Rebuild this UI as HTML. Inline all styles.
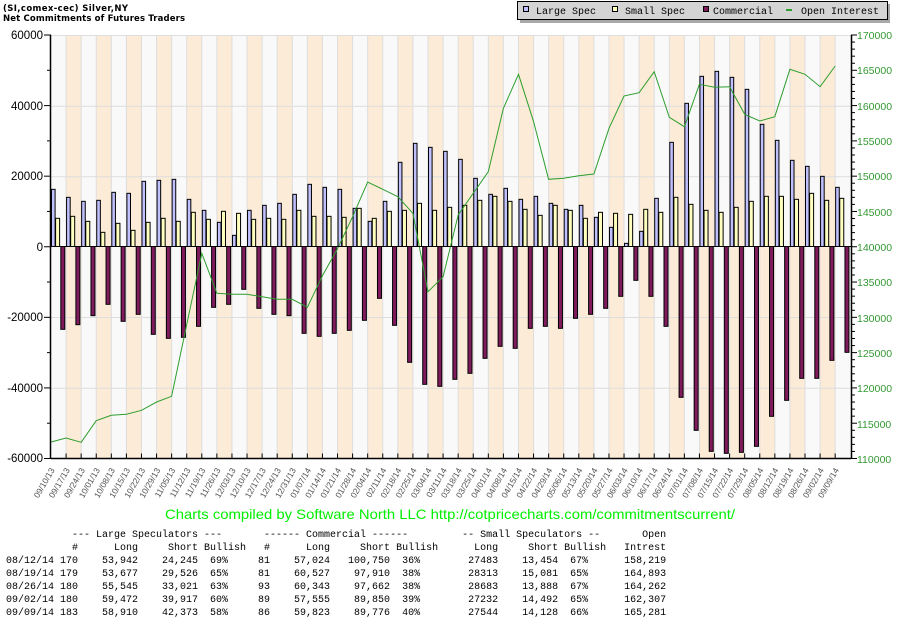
<!DOCTYPE html>
<html><head><meta charset="utf-8"><style>
html,body{margin:0;padding:0;background:#fff;width:900px;height:620px;overflow:hidden}
svg{display:block}
pre{margin:0;position:absolute;left:6px;top:529px;font:10px/13px "Liberation Mono",monospace;color:#000}
</style></head><body>
<svg id="s" width="900" height="620" xmlns="http://www.w3.org/2000/svg">
<g id="bg"></g>
<g id="bars"></g>
<polyline id="oi" fill="none" stroke="#2e9e2e" stroke-width="1"/>
<g id="ax"></g>
<text x="3" y="11" font-family="DejaVu Sans,sans-serif" font-weight="bold" font-size="8.5" textLength="125">(SI,comex-cec) Silver,NY</text>
<text x="3" y="21" font-family="DejaVu Sans,sans-serif" font-weight="bold" font-size="8.5" textLength="182">Net Commitments of Futures Traders</text>
<rect x="520" y="4" width="370" height="19" fill="#a8a8a8"/>
<rect x="517.5" y="1.5" width="370" height="18" fill="#d4d4d4" stroke="#000"/>
<rect x="523.5" y="6.5" width="5" height="5" fill="#c0c0ff" stroke="#000"/>
<rect x="612.5" y="6.5" width="5" height="5" fill="#ffffc0" stroke="#000"/>
<rect x="703.5" y="6.5" width="5" height="5" fill="#7f1a5c" stroke="#000"/>
<rect x="786" y="9" width="6" height="2" fill="#2e9e2e"/>
<g font-family="Liberation Mono,monospace" font-size="10">
<text x="536" y="14">Large Spec</text><text x="625" y="14">Small Spec</text><text x="713" y="14">Commercial</text><text x="801" y="14">Open Interest</text>
</g>
<g font-family="Liberation Sans,sans-serif" font-size="11.5" text-anchor="end">
<text x="43" y="39">60000</text><text x="43" y="110">40000</text><text x="43" y="180">20000</text><text x="43" y="251">0</text><text x="43" y="321">-20000</text><text x="43" y="392">-40000</text><text x="43" y="462">-60000</text>
</g>
<g font-family="Liberation Sans,sans-serif" font-size="10.5" fill="#339933">
<text x="857" y="39">170000</text><text x="857" y="74">165000</text><text x="857" y="110">160000</text><text x="857" y="145">155000</text><text x="857" y="180">150000</text><text x="857" y="216">145000</text><text x="857" y="251">140000</text><text x="857" y="286">135000</text><text x="857" y="322">130000</text><text x="857" y="357">125000</text><text x="857" y="392">120000</text><text x="857" y="428">115000</text><text x="857" y="463">110000</text>
</g>
<g font-family="Liberation Sans,sans-serif" font-size="8.5" fill="#555" text-anchor="end">
<text transform="translate(55,470) rotate(-60)">09/10/13</text>
<text transform="translate(70.1,470) rotate(-60)">09/17/13</text>
<text transform="translate(85.2,470) rotate(-60)">09/24/13</text>
<text transform="translate(100.2,470) rotate(-60)">10/01/13</text>
<text transform="translate(115.3,470) rotate(-60)">10/08/13</text>
<text transform="translate(130.4,470) rotate(-60)">10/15/13</text>
<text transform="translate(145.5,470) rotate(-60)">10/22/13</text>
<text transform="translate(160.6,470) rotate(-60)">10/29/13</text>
<text transform="translate(175.6,470) rotate(-60)">11/05/13</text>
<text transform="translate(190.7,470) rotate(-60)">11/12/13</text>
<text transform="translate(205.8,470) rotate(-60)">11/19/13</text>
<text transform="translate(220.9,470) rotate(-60)">11/26/13</text>
<text transform="translate(236,470) rotate(-60)">12/03/13</text>
<text transform="translate(251,470) rotate(-60)">12/10/13</text>
<text transform="translate(266.1,470) rotate(-60)">12/17/13</text>
<text transform="translate(281.2,470) rotate(-60)">12/24/13</text>
<text transform="translate(296.3,470) rotate(-60)">12/31/13</text>
<text transform="translate(311.4,470) rotate(-60)">01/07/14</text>
<text transform="translate(326.4,470) rotate(-60)">01/14/14</text>
<text transform="translate(341.5,470) rotate(-60)">01/21/14</text>
<text transform="translate(356.6,470) rotate(-60)">01/28/14</text>
<text transform="translate(371.7,470) rotate(-60)">02/04/14</text>
<text transform="translate(386.8,470) rotate(-60)">02/11/14</text>
<text transform="translate(401.8,470) rotate(-60)">02/18/14</text>
<text transform="translate(416.9,470) rotate(-60)">02/25/14</text>
<text transform="translate(432,470) rotate(-60)">03/04/14</text>
<text transform="translate(447.1,470) rotate(-60)">03/11/14</text>
<text transform="translate(462.2,470) rotate(-60)">03/18/14</text>
<text transform="translate(477.2,470) rotate(-60)">03/25/14</text>
<text transform="translate(492.3,470) rotate(-60)">04/01/14</text>
<text transform="translate(507.4,470) rotate(-60)">04/08/14</text>
<text transform="translate(522.5,470) rotate(-60)">04/15/14</text>
<text transform="translate(537.6,470) rotate(-60)">04/22/14</text>
<text transform="translate(552.6,470) rotate(-60)">04/29/14</text>
<text transform="translate(567.7,470) rotate(-60)">05/06/14</text>
<text transform="translate(582.8,470) rotate(-60)">05/13/14</text>
<text transform="translate(597.9,470) rotate(-60)">05/20/14</text>
<text transform="translate(613,470) rotate(-60)">05/27/14</text>
<text transform="translate(628,470) rotate(-60)">06/03/14</text>
<text transform="translate(643.1,470) rotate(-60)">06/10/14</text>
<text transform="translate(658.2,470) rotate(-60)">06/17/14</text>
<text transform="translate(673.3,470) rotate(-60)">06/24/14</text>
<text transform="translate(688.4,470) rotate(-60)">07/01/14</text>
<text transform="translate(703.4,470) rotate(-60)">07/08/14</text>
<text transform="translate(718.5,470) rotate(-60)">07/15/14</text>
<text transform="translate(733.6,470) rotate(-60)">07/22/14</text>
<text transform="translate(748.7,470) rotate(-60)">07/29/14</text>
<text transform="translate(763.8,470) rotate(-60)">08/05/14</text>
<text transform="translate(778.8,470) rotate(-60)">08/12/14</text>
<text transform="translate(793.9,470) rotate(-60)">08/19/14</text>
<text transform="translate(809,470) rotate(-60)">08/26/14</text>
<text transform="translate(824.1,470) rotate(-60)">09/02/14</text>
<text transform="translate(839.2,470) rotate(-60)">09/09/14</text>
</g>
<text x="165" y="519" font-family="Liberation Sans,sans-serif" font-size="14" fill="#00ee00" textLength="570" lengthAdjust="spacingAndGlyphs">Charts compiled by Software North LLC  http://cotpricecharts.com/commitmentscurrent/</text>
</svg>
<pre>           --- Large Speculators ---       ------ Commercial ------         -- Small Speculators --       Open
           #      Long     Short Bullish   #      Long     Short Bullish      Long     Short Bullish   Intrest
08/12/14 170    53,942    24,245  69%     81    57,024   100,750  36%        27483    13,454  67%      158,219
08/19/14 179    53,677    29,526  65%     81    60,527    97,910  38%        28313    15,081  65%      164,893
08/26/14 180    55,545    33,021  63%     93    60,343    97,662  38%        28683    13,888  67%      164,262
09/02/14 180    59,472    39,917  60%     89    57,555    89,850  39%        27232    14,492  65%      162,307
09/09/14 183    58,910    42,373  58%     86    59,823    89,776  40%        27544    14,128  66%      165,281</pre>
<script>
var NS="http://www.w3.org/2000/svg";
function el(p,t,a){var e=document.createElementNS(NS,t);for(var k in a)e.setAttribute(k,a[k]);p.appendChild(e);return e;}
var bg=document.getElementById("bg"),bars=document.getElementById("bars"),ax=document.getElementById("ax");
var X0=51,W=15.08,Z=246.5,T=35,B=458.5,R=851;
for(var i=0;i<53;i++){var x=X0+W*i;el(bg,"rect",{x:x,y:T,width:W,height:B-T,fill:i%2?"#fcebd6":"#f9f9f9"});}
for(var i=1;i<53;i++){var x=X0+W*i;el(bg,"line",{x1:x,y1:T,x2:x,y2:B,stroke:"#ddd"});el(ax,"line",{x1:x,y1:B-5,x2:x,y2:B,stroke:"#000"});}
[35,105.7,176.2,317,387.8].forEach(function(y){el(bg,"line",{x1:X0,y1:y+.5,x2:R,y2:y+.5,stroke:"#ddd"});});
var L=[478,502,514,511,487,490,454,451,448,508,541,577,616,541,526,520,493,463,472,478,535,574,514,397,340,352,364,388,445,493,475,508,499,520,538,526,562,592,640,604,505,337,220,139,124,142,178,283,331,391,409,439,472];
var S=[565,559,574,607,580,601,577,565,574,547,568,544,550,568,565,568,541,559,559,562,535,565,544,541,520,541,532,526,511,499,514,538,556,526,541,565,547,550,553,538,547,502,523,541,547,532,514,499,499,508,490,511,505];
var C=[898,884,857,823,874,853,913,925,922,889,832,823,778,835,853,857,910,919,910,901,871,805,886,997,1063,1069,1048,1030,985,949,955,895,889,895,865,853,835,799,751,799,889,1102,1201,1264,1270,1267,1249,1159,1111,1045,1045,991,967];
var O=[1236,1224,1237,1172,1156,1153,1141,1116,1099,884,670,790,793,793,800,808,808,832,737,656,560,456,478,500,550,785,740,555,490,425,235,133,275,448,445,437,432,295,198,188,125,262,290,163,172,170,253,273,260,118,133,170,108];
function Y(z){return 30+z/3;}
var pts=[];
for(var i=0;i<53;i++){var bx=X0+W*i;
 var yl=Y(L[i]);el(bars,"rect",{x:bx+.5,y:Math.min(yl,Z),width:3.6,height:Math.abs(Z-yl),fill:"#c0c0ff",stroke:"#000"});
 var ys=Y(S[i]);el(bars,"rect",{x:bx+4.6,y:Math.min(ys,Z),width:4,height:Math.abs(Z-ys),fill:"#ffffc0",stroke:"#000"});
 var yc=Y(C[i]);el(bars,"rect",{x:bx+9.8,y:Z,width:4,height:yc-Z,fill:"#7f1a5c",stroke:"#000"});
 pts.push(bx.toFixed(1)+","+Y(O[i]).toFixed(1));}
document.getElementById("oi").setAttribute("points",pts.join(" "));
el(ax,"line",{x1:X0,y1:Z,x2:R,y2:Z,stroke:"#000"});
el(ax,"line",{x1:X0-.5,y1:T,x2:X0-.5,y2:B+.5,stroke:"#000","stroke-width":1.5});
el(ax,"line",{x1:R+.5,y1:T,x2:R+.5,y2:B+.5,stroke:"#000","stroke-width":1.5});
el(ax,"line",{x1:X0,y1:B,x2:R,y2:B,stroke:"#000","stroke-width":1.5});
for(var k=0;k<=12;k++){var y=T+(B-T)*k/12;el(ax,"line",{x1:k%2?X0-4:X0-7,y1:y,x2:X0,y2:y,stroke:"#000"});}
for(var k=0;k<=60;k++){var y=T+(B-T)*k/60;el(ax,"line",{x1:R,y1:y,x2:k%5?R+4:R+6,y2:y,stroke:"#000"});}
</script>
</body></html>
